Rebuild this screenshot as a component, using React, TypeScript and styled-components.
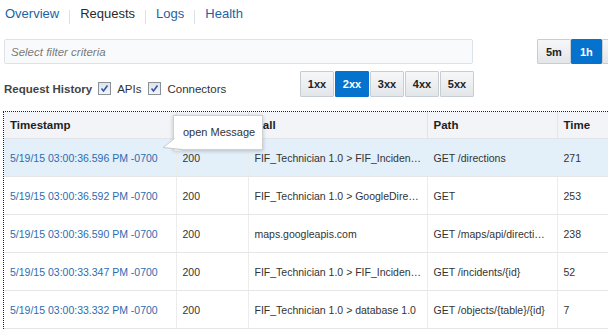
import React from 'react';
import styled, { createGlobalStyle } from 'styled-components';

const GlobalStyle = createGlobalStyle`
  html, body {
    margin: 0;
    padding: 0;
    background: #fff;
    overflow: hidden;
  }
  body {
    font-family: 'Liberation Sans', Arial, sans-serif;
    color: #333;
  }
`;

const TABS = ['Overview', 'Requests', 'Logs', 'Health'];
const STATUS = ['1xx', '2xx', '3xx', '4xx', '5xx'];
const RANGES = ['5m', '1h', '1d'];

const COLUMNS = [
  { label: 'Timestamp', width: 172 },
  { label: 'Status', width: 72 },
  { label: 'Call', width: 179 },
  { label: 'Path', width: 130 },
  { label: 'Time', width: 87 },
];

const ROWS = [
  { ts: '5/19/15 03:00:36.596 PM -0700', status: '200', call: 'FIF_Technician 1.0 > FIF_Inciden…', path: 'GET /directions', time: '271' },
  { ts: '5/19/15 03:00:36.592 PM -0700', status: '200', call: 'FIF_Technician 1.0 > GoogleDire…', path: 'GET', time: '253' },
  { ts: '5/19/15 03:00:36.590 PM -0700', status: '200', call: 'maps.googleapis.com', path: 'GET /maps/api/directi…', time: '238' },
  { ts: '5/19/15 03:00:33.347 PM -0700', status: '200', call: 'FIF_Technician 1.0 > FIF_Inciden…', path: 'GET /incidents/{id}', time: '52' },
  { ts: '5/19/15 03:00:33.332 PM -0700', status: '200', call: 'FIF_Technician 1.0 > database 1.0', path: 'GET /objects/{table}/{id}', time: '7' },
];

const Page = styled.div`
  padding: 6px 0 0 4px;
  width: 608px;
  box-sizing: border-box;
`;

// --- tabs ---
const Tabs = styled.nav`
  display: flex;
  align-items: flex-start;
  height: 16px;
`;

const Tab = styled.span<{ $active?: boolean; $first?: boolean }>`
  font-size: 13px;
  line-height: 16px;
  padding: 0 10px 0 ${(p) => (p.$first ? '1px' : '10px')};
  color: ${(p) => (p.$active ? '#2a2a2a' : '#1a63a8')};
  cursor: pointer;
`;

const TabDivider = styled.span`
  width: 1px;
  height: 14px;
  margin-top: 4px;
  background: #dbe1e8;
`;

// --- filter row ---
const FilterRow = styled.div`
  display: flex;
  align-items: flex-start;
  margin-top: 17px;
`;

const FilterInput = styled.input`
  flex-shrink: 0;
  width: 469px;
  height: 25px;
  box-sizing: border-box;
  border: 1px solid #dde2e8;
  border-radius: 2px;
  background: #f9fafc;
  padding: 0 6px;
  font-family: inherit;
  font-size: 11.5px;
  outline: none;
  &::placeholder {
    color: #7a7a7a;
    font-style: italic;
  }
`;

const RangeGroup = styled.div`
  display: flex;
  margin-left: 64px;
  flex-shrink: 0;
`;

const ToggleButton = styled.button<{ $active?: boolean; $height: number }>`
  height: ${(p) => p.$height}px;
  box-sizing: border-box;
  padding: 0 8px;
  font-family: inherit;
  font-size: 11px;
  font-weight: bold;
  color: ${(p) => (p.$active ? '#fff' : '#222')};
  border: 1px solid ${(p) => (p.$active ? '#0572ce' : '#c8cdd3')};
  border-radius: 1px;
  background: ${(p) =>
    p.$active ? '#0572ce' : 'linear-gradient(to bottom, #f6f7f8 0%, #e3e6e9 100%)'};
  cursor: pointer;
`;

const StatusButton = styled(ToggleButton)`
  width: 34px;
  padding: 0;
`;

// --- history row ---
const HistoryRow = styled.div`
  display: flex;
  align-items: flex-end;
  justify-content: space-between;
  width: 470px;
  margin-top: 7px;
`;

const HistoryFilters = styled.div`
  display: flex;
  align-items: center;
  gap: 6px;
  margin-bottom: 2px;
`;

const HistoryLabel = styled.span`
  font-size: 11.5px;
  font-weight: bold;
  color: #444;
`;

const CheckLabel = styled.label`
  display: flex;
  align-items: center;
  gap: 6px;
  font-size: 11.5px;
  color: #333;
  margin-right: 1px;
`;

const CheckBox = styled.span`
  display: inline-flex;
  width: 13px;
  height: 13px;
  box-sizing: border-box;
  border: 1px solid #8a9098;
  background: linear-gradient(to bottom, #dfe3ea 0%, #f4f5f8 100%);
`;

const StatusGroup = styled.div`
  display: flex;
  gap: 1px;
`;

// --- table ---
const TableFrame = styled.div`
  position: relative;
  margin: 14px 0 0 -1px;
  border-top: 1px dotted #222;
  border-left: 1px dotted #222;
  width: 700px;
`;

const Table = styled.table`
  border-collapse: collapse;
  table-layout: fixed;
  width: 640px;
`;

const Th = styled.th`
  height: 26px;
  padding: 0 6px;
  text-align: left;
  font-size: 11.5px;
  font-weight: bold;
  color: #1e1e1e;
  background: #f2f4f7;
  white-space: nowrap;
  overflow: hidden;
  border-right: 1px solid #e1e5ea;
  border-bottom: 1px solid #e1e5ea;
`;

const Tr = styled.tr<{ $selected?: boolean }>`
  background: ${(p) => (p.$selected ? '#e3eff9' : '#fff')};
`;

const Td = styled.td<{ $link?: boolean }>`
  height: 37px;
  padding: 0 6px;
  font-size: 10.5px;
  color: ${(p) => (p.$link ? '#2d6cb0' : '#333')};
  white-space: nowrap;
  overflow: hidden;
  border-right: 1px solid #ececec;
  border-bottom: 1px solid #e6e6e6;
`;

const Tooltip = styled.div`
  position: absolute;
  left: 169px;
  top: 3px;
  width: 90px;
  height: 35px;
  box-sizing: border-box;
  padding-left: 9px;
  line-height: 33px;
  font-size: 11px;
  color: #333;
  background: #fff;
  border: 1px solid #d0d0d0;
  box-shadow: 0 1px 4px rgba(0, 0, 0, 0.22);
`;

const TooltipTail = styled.svg`
  position: absolute;
  left: -12px;
  bottom: -2px;
`;

const Check = () => (
  <CheckBox>
    <svg width="11" height="11" viewBox="0 0 11 11">
      <path d="M2.5 5.5 L4.5 8 L8.5 2.5" fill="none" stroke="#3656a6" strokeWidth="1.6" />
    </svg>
  </CheckBox>
);

export default function App() {
  return (
    <>
      <GlobalStyle />
      <Page>
        <Tabs>
          {TABS.map((t, i) => (
            <React.Fragment key={t}>
              {i > 0 && <TabDivider />}
              <Tab $first={i === 0} $active={t === 'Requests'}>
                {t}
              </Tab>
            </React.Fragment>
          ))}
        </Tabs>

        <FilterRow>
          <FilterInput placeholder="Select filter criteria" />
          <RangeGroup>
            {RANGES.map((r) => (
              <ToggleButton key={r} $height={25} $active={r === '1h'}>
                {r}
              </ToggleButton>
            ))}
          </RangeGroup>
        </FilterRow>

        <HistoryRow>
          <HistoryFilters>
            <HistoryLabel>Request History</HistoryLabel>
            <CheckLabel>
              <Check />
              APIs
            </CheckLabel>
            <CheckLabel>
              <Check />
              Connectors
            </CheckLabel>
          </HistoryFilters>
          <StatusGroup>
            {STATUS.map((s) => (
              <StatusButton key={s} $height={26} $active={s === '2xx'}>
                {s}
              </StatusButton>
            ))}
          </StatusGroup>
        </HistoryRow>

        <TableFrame>
          <Table>
            <colgroup>
              {COLUMNS.map((c) => (
                <col key={c.label} style={{ width: c.width }} />
              ))}
            </colgroup>
            <thead>
              <tr>
                {COLUMNS.map((c) => (
                  <Th key={c.label}>{c.label}</Th>
                ))}
              </tr>
            </thead>
            <tbody>
              {ROWS.map((r, i) => (
                <Tr key={i} $selected={i === 0}>
                  <Td $link>{r.ts}</Td>
                  <Td>{r.status}</Td>
                  <Td>{r.call}</Td>
                  <Td>{r.path}</Td>
                  <Td>{r.time}</Td>
                </Tr>
              ))}
            </tbody>
          </Table>

          <Tooltip>
            open Message
            <TooltipTail width="22" height="14" viewBox="0 0 22 14">
              <polygon points="12.5,1 1,10 21,13.5 12.5,13.5" fill="#fff" />
              <polyline points="12.5,1.5 1,10.5 20,12.5" fill="none" stroke="#c8c8c8" />
            </TooltipTail>
          </Tooltip>
        </TableFrame>
      </Page>
    </>
  );
}
